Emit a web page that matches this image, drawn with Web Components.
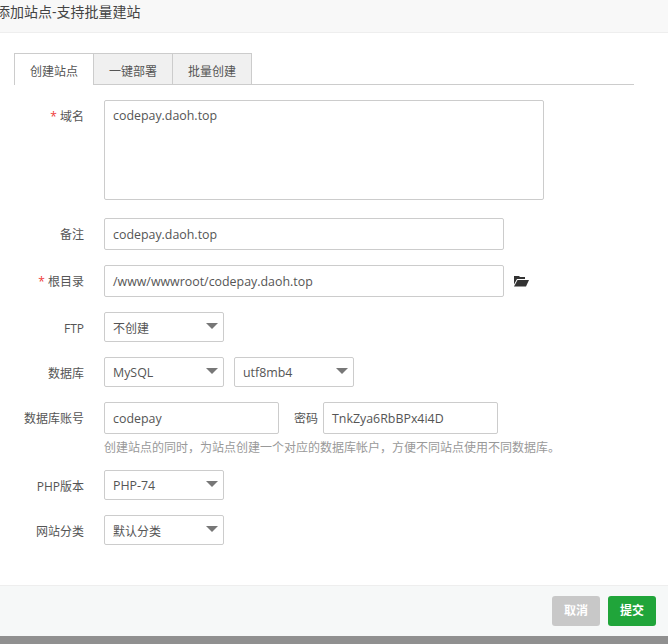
<!DOCTYPE html>
<html lang="zh">
<head>
<meta charset="utf-8">
<title>添加站点</title>
<style>
  html, body { margin: 0; padding: 0; background: #fff; }
  body { font-family: "Open Sans", "Noto Sans CJK SC", sans-serif; color: #555; overflow: hidden; }
  .pair-label { font-size: 12px; color: #555; width: 24px; margin-left: 5px; margin-right: -5px; white-space: nowrap; }
</style>
</head>
<body>
<site-dialog>
  <span slot="title">添加站点-支持批量建站</span>
  <tab-bar></tab-bar>
  <form-row label="域名" required gap="18">
    <text-field value="codepay.daoh.top" width="440" height="100" multiline></text-field>
  </form-row>
  <form-row label="备注" gap="15">
    <text-field value="codepay.daoh.top" width="400"></text-field>
  </form-row>
  <form-row label="根目录" required gap="15">
    <text-field value="/www/wwwroot/codepay.daoh.top" width="400"></text-field>
    <folder-icon></folder-icon>
  </form-row>
  <form-row label="FTP" gap="13">
    <select-box value="不创建" width="120"></select-box>
  </form-row>
  <form-row label="数据库" gap="13">
    <select-box value="MySQL" width="120"></select-box>
    <select-box value="utf8mb4" width="120"></select-box>
  </form-row>
  <form-row label="数据库账号" gap="0">
    <text-field value="codepay" width="175"></text-field>
    <span class="pair-label">密码</span>
    <text-field value="TnkZya6RbBPx4i4D" width="175"></text-field>
  </form-row>
  <help-text>创建站点的同时，为站点创建一个对应的数据库帐户，方便不同站点使用不同数据库。</help-text>
  <form-row label="PHP版本" gap="13">
    <select-box value="PHP-74" width="120"></select-box>
  </form-row>
  <form-row label="网站分类" gap="0">
    <select-box value="默认分类" width="120"></select-box>
  </form-row>
  <flat-button slot="footer" color="#c8c8c8">取消</flat-button>
  <flat-button slot="footer" color="#20a53a">提交</flat-button>
</site-dialog>

<script>
class SiteDialog extends HTMLElement {
  connectedCallback() {
    this.attachShadow({ mode: 'open' });
    this.shadowRoot.innerHTML = `
      <style>
        :host { display: flex; flex-direction: column; width: 668px; height: 644px; background: #fff; overflow: hidden; }
        .title {
          height: 33px; line-height: 24px; flex: none; box-sizing: border-box;
          background: #f8f8f8; border-bottom: 1px solid #eee;
          font-size: 14px; color: #444; text-indent: -4px;
          white-space: nowrap; overflow: hidden;
        }
        .body { flex: 1; padding: 20px 0 0 14px; min-height: 0; }
        .footer {
          flex: none; height: 51px; box-sizing: border-box; background: #f6f8f8;
          border-top: 1px solid #eee; display: flex; justify-content: flex-end;
          gap: 8px; padding: 10px 12px 0 0;
        }
        .shade { flex: none; height: 8px; background: #909090; }
      </style>
      <div class="title"><slot name="title"></slot></div>
      <div class="body"><slot></slot></div>
      <div class="footer"><slot name="footer"></slot></div>
      <div class="shade"></div>`;
  }
}

class TabBar extends HTMLElement {
  connectedCallback() {
    this.attachShadow({ mode: 'open' });
    this.shadowRoot.innerHTML = `
      <style>
        :host { display: flex; width: 620px; height: 32px; box-sizing: border-box; border-bottom: 1px solid #ccc; margin-bottom: 15px; font-size: 12px; }
        .tab {
          width: 79px; height: 32px; box-sizing: border-box; line-height: 35px; text-align: center;
          background: #f0f0f0; color: #555; border: 1px solid #ccc; border-left: 0;
        }
        .tab.on { background: #fff; border-left: 1px solid #ccc; border-bottom: 0; width: 80px; }
      </style>
      <div class="tab on">创建站点</div>
      <div class="tab">一键部署</div>
      <div class="tab">批量创建</div>`;
  }
}

class FormRow extends HTMLElement {
  connectedCallback() {
    this.attachShadow({ mode: 'open' });
    const required = this.hasAttribute('required');
    const gap = this.getAttribute('gap') || 0;
    this.shadowRoot.innerHTML = `
      <style>
        :host { display: flex; margin-bottom: ${gap}px; font-size: 12px; }
        .label { width: 70px; flex: none; text-align: right; height: 32px; line-height: 34px; color: #555; white-space: nowrap; margin-right: 20px; }
        .star { color: #ef3a3a; }
        .fields { display: flex; align-items: center; align-self: flex-start; gap: 10px; }
      </style>
      <div class="label">${required ? '<span class="star">*</span> ' : ''}${this.getAttribute('label')}</div>
      <div class="fields"><slot></slot></div>`;
  }
}

class TextField extends HTMLElement {
  connectedCallback() {
    this.attachShadow({ mode: 'open' });
    const h = this.getAttribute('height') || 32;
    const lh = this.hasAttribute('multiline') ? 30 : 32;
    this.shadowRoot.innerHTML = `
      <style>
        :host { display: block; flex: none; width: ${this.getAttribute('width')}px; height: ${h}px; box-sizing: border-box; border: 1px solid #ccc; border-radius: 2px; background: #fff; font-size: 12.4px; color: #555; padding: 0 8px; line-height: ${lh}px; overflow: hidden; white-space: nowrap; }
      </style>
      ${this.getAttribute('value')}`;
  }
}

class SelectBox extends HTMLElement {
  connectedCallback() {
    this.attachShadow({ mode: 'open' });
    const value = this.getAttribute('value');
    const size = /[\u4e00-\u9fff]/.test(value) ? 12 : 12.4;
    this.shadowRoot.innerHTML = `
      <style>
        :host { display: flex; align-items: center; flex: none; width: ${this.getAttribute('width')}px; height: 30px; box-sizing: border-box; border: 1px solid #ccc; border-radius: 2px; background: #fff; color: #555; padding: 0 8px; }
        .text { flex: 1; font-size: ${size}px; white-space: nowrap; margin-top: 1px; }
        .arrow { width: 0; height: 0; border-left: 6px solid transparent; border-right: 6px solid transparent; border-top: 6px solid #777; margin: -3px -3px 0 0; }
      </style>
      <span class="text">${value}</span><span class="arrow"></span>`;
  }
}

class FolderIcon extends HTMLElement {
  connectedCallback() {
    this.attachShadow({ mode: 'open' });
    this.shadowRoot.innerHTML = `
      <style>:host { display: block; flex: none; width: 16px; height: 12px; margin-left: -1px; } svg { display: block; }</style>
      <svg width="16" height="12" viewBox="0 0 16 12" fill="#333">
        <path d="M1 2V1h5l1 1h5v2H4L1 9.5V2z"/>
        <path d="M4.5 5H16l-3 6.5H1z"/>
      </svg>`;
  }
}

class HelpText extends HTMLElement {
  connectedCallback() {
    this.attachShadow({ mode: 'open' });
    this.shadowRoot.innerHTML = `
      <style>:host { display: block; margin: 4px 0 12px 90px; font-size: 12px; line-height: 20px; color: #999; white-space: nowrap; }</style>
      <slot></slot>`;
  }
}

class FlatButton extends HTMLElement {
  connectedCallback() {
    this.attachShadow({ mode: 'open' });
    this.shadowRoot.innerHTML = `
      <style>:host { display: block; width: 48px; height: 30px; border-radius: 3px; background: ${this.getAttribute('color')}; color: #fff; font-size: 12px; font-weight: 700; text-align: center; line-height: 30px; }</style>
      <slot></slot>`;
  }
}

customElements.define('site-dialog', SiteDialog);
customElements.define('tab-bar', TabBar);
customElements.define('form-row', FormRow);
customElements.define('text-field', TextField);
customElements.define('select-box', SelectBox);
customElements.define('folder-icon', FolderIcon);
customElements.define('help-text', HelpText);
customElements.define('flat-button', FlatButton);
</script>
</body>
</html>
